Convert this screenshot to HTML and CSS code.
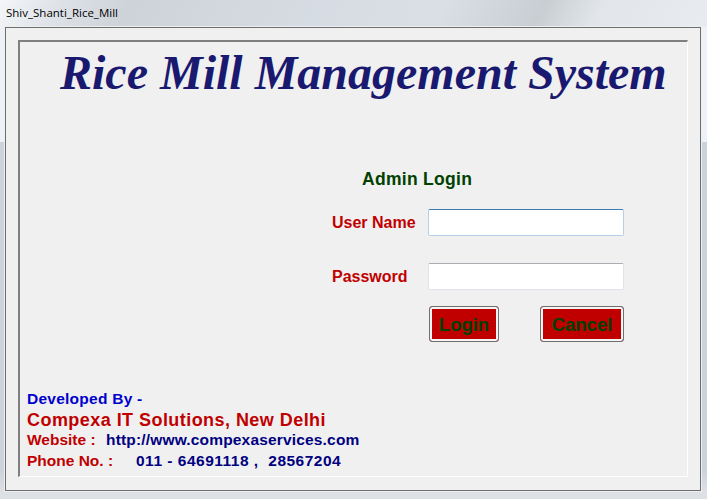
FILE: index.html
```html
<!DOCTYPE html>
<html lang="en">
<head>
<meta charset="utf-8">
<title>Shiv_Shanti_Rice_Mill</title>
<link rel="stylesheet" href="styles.css">
</head>
<body>
<div class="window">
  <div class="titlebar">Shiv_Shanti_Rice_Mill</div>
  <div class="client">
    <div class="group">
      <h1 class="app-title">Rice Mill Management System</h1>
      <form class="login">
        <h2 class="login-title">Admin Login</h2>
        <div class="field">
          <label class="field-label" for="user">User Name</label>
          <input class="field-input field-input-focus" id="user" type="text">
        </div>
        <div class="field">
          <label class="field-label" for="pass">Password</label>
          <input class="field-input" id="pass" type="password">
        </div>
        <div class="actions">
          <button class="btn btn-login" type="button">Login</button>
          <button class="btn btn-cancel" type="button">Cancel</button>
        </div>
      </form>
      <div class="credits">
        <div class="credit-by">Developed By -</div>
        <div class="credit-company">Compexa IT Solutions, New Delhi</div>
        <div class="credit-line"><span class="credit-key key-web">Website :</span><span class="credit-val">http://www.compexaservices.com</span></div>
        <div class="credit-line"><span class="credit-key key-phone">Phone No. :</span><span class="credit-val val-phone">011 - 64691118 ,&nbsp; 28567204</span></div>
      </div>
    </div>
  </div>
</div>
</body>
</html>
```
FILE: styles.css
```css
* { box-sizing: border-box; }
html, body { margin: 0; padding: 0; }
body { width: 707px; height: 499px; overflow: hidden; font-family: "Liberation Sans", Arial, sans-serif; }

.window {
  width: 707px;
  height: 499px;
  padding: 0 6px 8px 5px;
  display: flex;
  flex-direction: column;
  background:
    linear-gradient(180deg, #eef1f5 0, #eef1f5 115px, #cdd3da 115px, #cdd3da 443px, #dde1e6 465px),
    linear-gradient(115deg, #f4f6f8 0%, #dfe3e8 8%, #ced3d9 18%, #d6dce3 45%, #dadfe5 62%, #c9ced3 76%, #e2e6ea 84%, #e8ebef 100%);
  background-size: 100% 100%, 100% 27px;
  background-repeat: no-repeat;
  background-position: 0 27px, 0 0;
}
.titlebar {
  height: 27px;
  flex: none;
  padding: 5px 0 0 1px;
  font: 11.5px/16px "Open Sans", Arial, sans-serif;
  color: #000;
}
.client {
  flex: 1;
  border: 1px solid #6d6d6d;
  outline: 1px solid #eef0f2;
  background: #f0f0f0;
  padding: 12px 12px 13px 12px;
  display: flex;
}
.group {
  flex: 1;
  border-style: solid;
  border-width: 2px 1px 1px 2px;
  border-color: #7f7f7f #fff #fff #7f7f7f;
  display: flex;
  flex-direction: column;
}
.app-title {
  margin: 0;
  padding: 0 0 0 40px;
  height: 62px;
  font: italic bold 48px/62px "Liberation Serif", "Times New Roman", serif;
  color: #191970;
  white-space: nowrap;
}
.login {
  margin: 63px 0 0 312px;
  width: 300px;
}
.login-title {
  margin: 0 0 17px 30px;
  font: bold 17.5px/25px "Liberation Sans", Arial, sans-serif;
  letter-spacing: 0.3px;
  color: #004000;
}
.field {
  display: flex;
  align-items: center;
  height: 27px;
  margin-bottom: 27px;
}
.field-label {
  width: 96px;
  font: bold 16px/20px "Liberation Sans", Arial, sans-serif;
  color: #c00000;
}
.field-input {
  width: 196px;
  height: 27px;
  padding: 0;
  background: #fff;
  border: 1px solid #e2e3ea;
  border-top-color: #abadb3;
  border-radius: 2px;
  outline: none;
}
.field-input-focus {
  border-color: #b5cfe7;
  border-top-color: #3d7bad;
}
.actions {
  display: flex;
  margin: -11px 0 0 97px;
}
.btn {
  height: 36px;
  padding: 2px 0 0;
  border: 1px solid #707070;
  border-radius: 3px;
  background: #c00000;
  box-shadow: inset 0 0 0 2px #f4f4f4;
  font: bold 18.5px/22px "Liberation Sans", Arial, sans-serif;
  color: #004000;
}
.btn-login { width: 70px; margin-right: 41px; }
.btn-cancel { width: 84px; }
.credits {
  margin: 48px 0 0 7px;
}
.credit-by {
  font: bold 15.5px/18px "Liberation Sans", Arial, sans-serif;
  letter-spacing: 0.25px;
  color: #0000cd;
}
.credit-company {
  margin-top: 1px;
  font: bold 18px/22px "Liberation Sans", Arial, sans-serif;
  letter-spacing: 0.45px;
  color: #c00000;
}
.credit-line {
  display: flex;
  font: bold 15.5px/18px "Liberation Sans", Arial, sans-serif;
}
.credit-line + .credit-line { margin-top: 3px; }
.credit-company + .credit-line { margin-top: 0; }
.credit-key { color: #c00000; flex: none; }
.key-web { width: 79px; }
.key-phone { width: 109px; }
.credit-val { color: #000080; letter-spacing: 0.17px; }
.val-phone { letter-spacing: 0.5px; }
```
